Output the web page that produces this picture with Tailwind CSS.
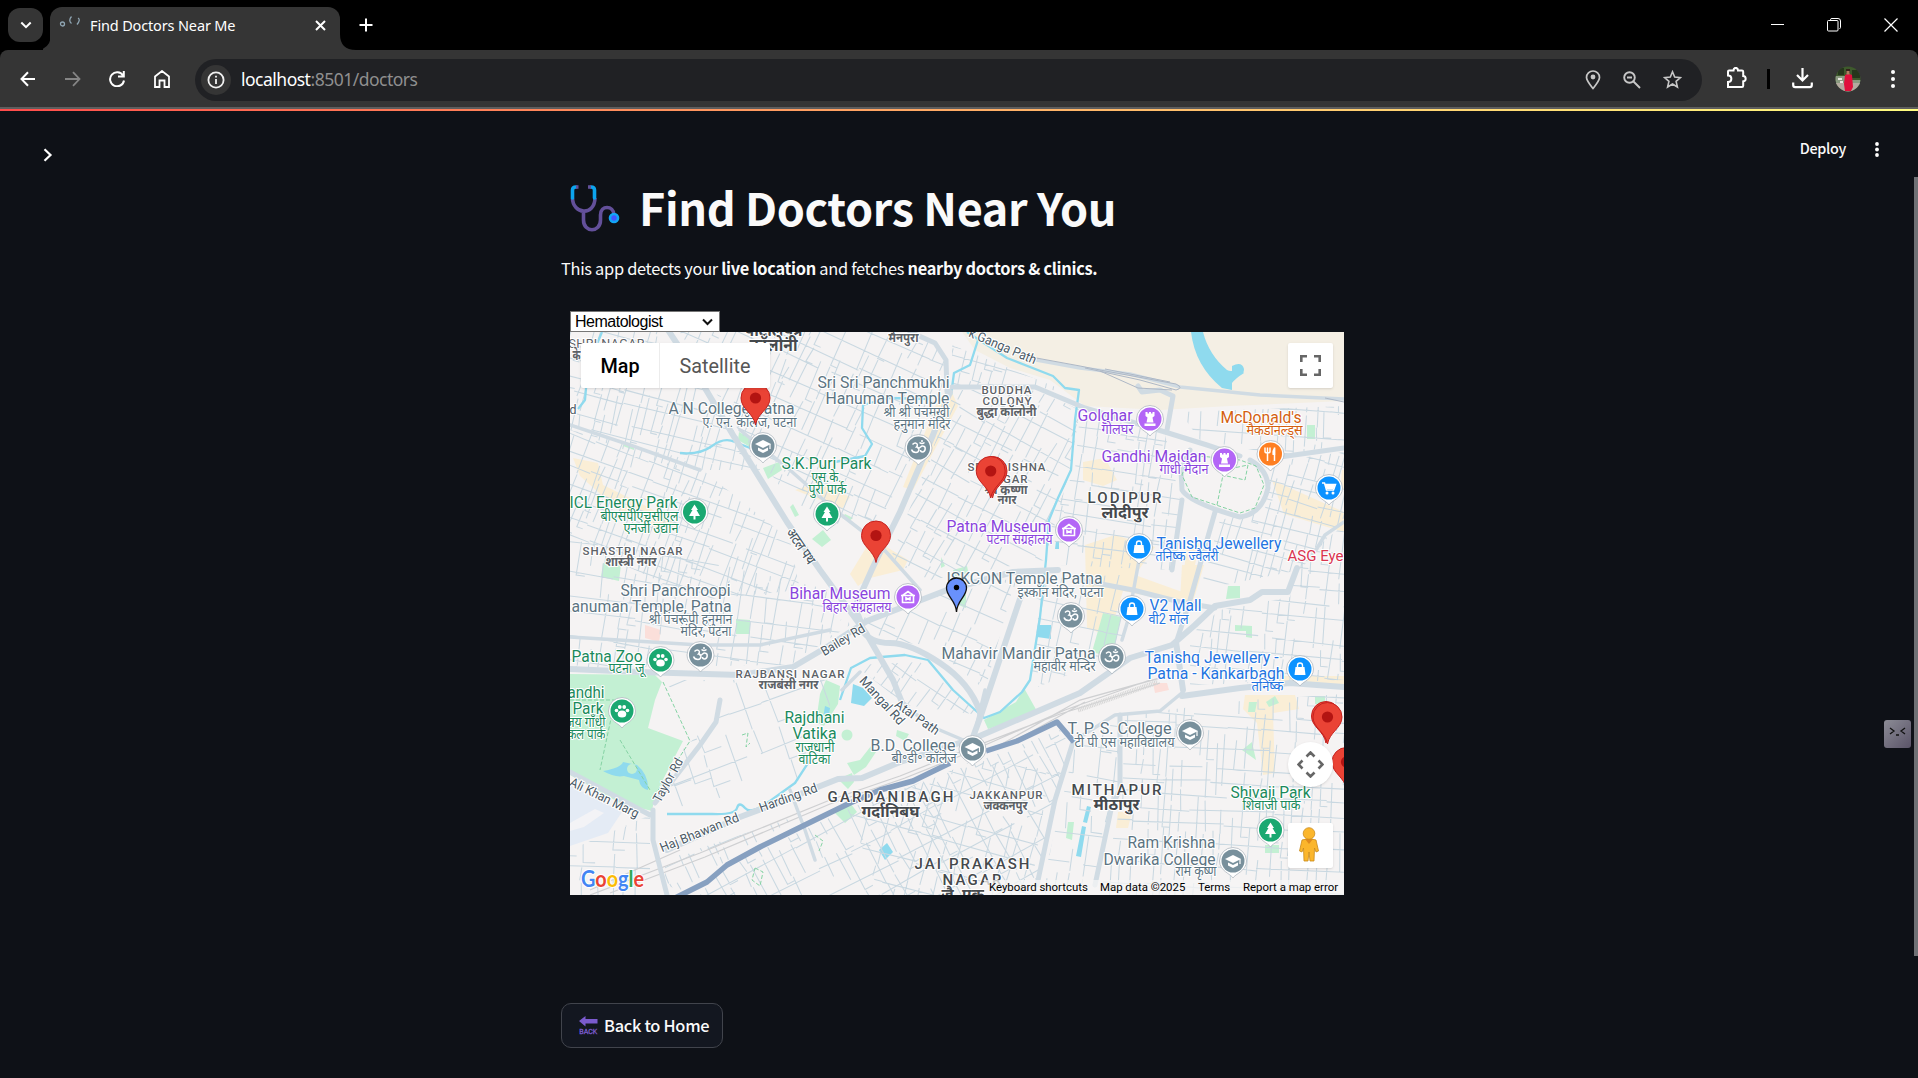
<!DOCTYPE html>
<html lang="en">
<head>
<meta charset="utf-8">
<title>Find Doctors Near Me</title>
<script src="https://cdn.jsdelivr.net/npm/@tailwindcss/browser@4"></script>
</head>
<body class="w-screen h-screen overflow-hidden bg-[#0e1117] font-['Noto_Sans_CJK_SC',sans-serif] text-[#fafafa] flex flex-col">

<!-- Tab strip -->
<div class="h-[50px] shrink-0 bg-black flex items-end">
  <div class="ml-2 mb-2 w-[35px] h-[34px] rounded-xl bg-[#353535] grid place-items-center">
    <svg width="14" height="14" viewBox="0 0 14 14" fill="none" stroke="#fff" stroke-width="2"><path d="M2.3 4.5 7 9.2 11.7 4.5"/></svg>
  </div>
  <svg class="-mr-px ml-0" width="8" height="50"><path d="M8 50H-8Q8 50 8 34Z" fill="#353535"/></svg>
  <div class="w-[290px] h-[43px] rounded-t-xl bg-[#353535] flex items-start pt-[8px] pl-[9px]">
    <svg class="mt-0" width="24" height="20" viewBox="0 0 24 20" fill="none" stroke="#8fa5b3" stroke-width="1.3"><circle cx="3.500" cy="9" r="2"/><path d="M12.500 1.500q-3.500 4 0 7M19 3q3 1.500-1 6.500"/></svg>
    <span class="ml-[7px] w-[146px] whitespace-nowrap font-['Noto_Sans',sans-serif] text-[14.5px] leading-[20px] tracking-[-0.15px] text-white">Find Doctors Near Me</span>
    <svg class="ml-[78px] mt-[4px]" width="13" height="13" viewBox="0 0 13 13" stroke="#fff" stroke-width="2"><path d="M2 2l9 9M11 2l-9 9"/></svg>
  </div>
  <svg width="16" height="16"><path d="M0 16H16Q0 16 0 0Z" fill="#353535"/></svg>
  <svg class="mb-[18px] ml-[3px]" width="14" height="14" viewBox="0 0 14 14" stroke="#fff" stroke-width="2"><path d="M7 .5v13M.5 7h13"/></svg>
  <div class="flex-1"></div>
  <div class="flex items-center gap-[43px] mb-[18px] mr-[20px]">
    <svg width="13" height="14" stroke="#fff"><path d="M0 6.500h13"/></svg>
    <svg width="14" height="14" fill="none" stroke="#fff"><path d="M3.500 3V1.500Q3.500.5 5 .5h6q2.500 0 2.500 2.500v6.500q0 1-1 1"/><rect x=".5" y="2.500" width="10.500" height="10.500" rx="1"/></svg>
    <svg width="14" height="14" stroke="#fff" stroke-width="1.2"><path d="M.5.5l13 13M13.500.5l-13 13"/></svg>
  </div>
</div>

<!-- Toolbar -->
<div class="h-[57px] shrink-0 bg-black">
 <div class="h-full rounded-t-lg bg-[#353535] flex items-center">
  <div class="flex items-center gap-[29px] ml-[20px]">
    <svg width="16" height="16" viewBox="0 0 16 16" fill="none" stroke="#fff" stroke-width="2"><path d="M15 8H2M8 1.200 1.500 8 8 14.800"/></svg>
    <svg width="16" height="16" viewBox="0 0 16 16" fill="none" stroke="#858585" stroke-width="1.800"><path d="M0 8H14M8 1.200 14.500 8 8 14.800"/></svg>
    <svg class="-ml-px" width="16" height="16" viewBox="0 0 16 16" fill="none" stroke="#fff" stroke-width="2"><path d="M14 4.500A7 7 0 1 0 15 9.500M14.800 0V5.500H9"/></svg>
    <svg width="16" height="18" viewBox="0 0 16 18" fill="none" stroke="#fff" stroke-width="1.800"><path d="M1 17V6.500L8 1l7 5.500V17h-4.500v-6.500h-5V17Z"/></svg>
  </div>
  <div class="ml-[25px] w-[1507px] h-[42px] rounded-full bg-[#202124] flex items-center pl-[6px] mt-[2px]">
    <div class="size-[30px] rounded-full bg-[#353535] grid place-items-center">
      <svg width="18" height="18" viewBox="0 0 18 18" fill="none" stroke="#f1f1f1" stroke-width="1.800"><circle cx="9" cy="9" r="7.600"/><path d="M9 8v5M9 4.800v1.800"/></svg>
    </div>
    <div class="ml-[10px] w-[190px] whitespace-nowrap font-['Noto_Sans',sans-serif] text-[17.5px] tracking-[-0.5px] text-[#8f8f8f]"><span class="text-white">localhost</span>:8501/doctors</div>
    <div class="flex-1"></div>
    <div class="flex items-center gap-[22px] mr-[20px]">
      <svg width="16" height="20" viewBox="0 0 16 20" fill="none" stroke="#c7c7c7" stroke-width="1.700"><path d="M8 18.500C4 13.500 1.500 10.500 1.500 7.500a6.500 6.500 0 0 1 13 0c0 3-2.500 6-6.500 11Z"/><circle cx="8" cy="7" r="2.400" fill="#c7c7c7" stroke="none"/></svg>
      <svg width="18" height="18" viewBox="0 0 18 18" fill="none" stroke="#c7c7c7" stroke-width="1.900"><circle cx="6.500" cy="6.500" r="5.300"/><path d="M10.500 10.500l6.500 6.500M4 6.500h5"/></svg>
      <svg width="19" height="19" viewBox="0 0 19 19" fill="none" stroke="#c7c7c7" stroke-width="1.600"><path d="M9.500 1.800l2.200 5.300 5.800.5-4.400 3.800 1.300 5.600-4.900-3-4.900 3 1.300-5.600L1.500 7.600l5.800-.5Z"/></svg>
    </div>
  </div>
  <svg class="ml-[24px] -mt-[2px]" width="21" height="22" viewBox="0 0 21 22" fill="none" stroke="#fff" stroke-width="2"><path d="M2 4.500q0-1 1-1H7.500C7.500 0 12 0 12 3.500h4q1.200 0 1.200 1.200V9c3.300.3 3.300 5 0 5.300v4.500q0 1.200-1.200 1.200H2V15c4.500 0 4.500-6.500 0-6.500Z"/></svg>
  <div class="ml-[20px] w-[3px] h-[20px] bg-black"></div>
  <svg class="ml-[22px] -mt-[2px]" width="21" height="22" viewBox="0 0 21 22" fill="none" stroke="#fff" stroke-width="2.200"><path d="M10.500 1v12M5 8l5.500 5.500L16 8M1.200 15.500V18q0 2.200 2 2.200h14.600q2 0 2-2.200v-2.500"/></svg>
  <svg class="ml-[22px]" width="26" height="26" viewBox="0 0 26 26"><defs><clipPath id="av"><circle cx="13" cy="13" r="12.500"/></clipPath></defs><g clip-path="url(#av)"><path fill="#3e5a2c" d="M0 0h26v26H0z"/><path fill="#8a9a80" d="M0 10h10v8H0zM17 14h9v5h-9z"/><path fill="#b4aaa0" d="M0 17h26v9H0z"/><path fill="#25361c" d="M3 2h6v7H3zM17 4h8v8h-8z"/><path fill="#e8e6e0" d="M3 12h4v2H3zM5 15h3v2H5z"/><path fill="#e0103c" d="M10 9q3.500-2 7 0l1 12-2 4h-6l-1-7Z"/><path fill="#35221c" d="M11 3h4v4h-4z"/><path fill="#b07c60" d="M11.500 5h3v3.500h-3z"/></g></svg>
  <svg class="ml-[30px]" width="4" height="18" fill="#fff"><circle cx="2" cy="2" r="2"/><circle cx="2" cy="9" r="2"/><circle cx="2" cy="16" r="2"/></svg>
 </div>
</div>
<div class="h-[2px] shrink-0 bg-[#5e5e5e]"></div>
<div class="h-[2px] shrink-0 bg-linear-to-r from-[#ff4b4b] to-[#fffd80]"></div>

<!-- App -->
<div class="flex-1 flex justify-between min-h-0">
  <svg class="mt-[37px] ml-[43px] mr-[510px] shrink-0" width="10" height="14" viewBox="0 0 10 14" fill="none" stroke="#fff" stroke-width="2.200"><path d="M1.500 1.300 7.500 7l-6 5.700"/></svg>

  <main class="w-[790px] ml-[-2px] flex flex-col items-start pt-[64px]">
    <h1 class="flex items-center h-[64px] whitespace-nowrap">
      <svg class="ml-[8px] mt-[3px]" width="52" height="50" viewBox="569 184 52 50" fill="none" stroke-width="3.600"><path stroke="#63509a" d="M572.500 198c0 16 22 19 22.500 0M583.500 210v10c0 13 17 13 17 0v-5c0-10 13-10 13.500 0"/><path stroke="#0ca4ee" stroke-linecap="round" d="M576 187q-3.500 0-3.500 3v8M591 187q3.500 0 3.500 3v8"/><path stroke="#63509a" d="M576 187h2.500M588 187h3"/><circle cx="614" cy="218" r="5.300" fill="#12a5f5"/><circle cx="614" cy="218" r="2.700" fill="#4355ff"/></svg>
      <span class="ml-[18px] text-[45px] font-bold leading-[64px] tracking-[-0.4px]">Find Doctors Near You</span>
    </h1>
    <p class="mt-[15px] whitespace-nowrap text-[16.4px] leading-[28px] tracking-[-0.3px]">This app detects your <b>live location</b> and fetches <b>nearby doctors &amp; clinics.</b></p>

    <div class="mt-[29px] ml-[9px]">
      <div class="w-[150px] h-[21px] bg-white border border-[#767676] flex items-center justify-between pl-[4px] pr-[6px] font-['Liberation_Sans',sans-serif] text-[16px] text-black">
        <span class="tracking-[-0.5px]">Hematologist</span>
        <svg width="11" height="8" viewBox="0 0 11 8" fill="none" stroke="#111" stroke-width="2"><path d="M1 1.500 5.500 6 10 1.500"/></svg>
      </div>
      <div class="relative w-[774px] h-[563px] bg-[#f5f3f3] overflow-hidden">
        <svg id="map" class="block" width="774" height="563" viewBox="570 332 774 563" font-family="Roboto, 'Noto Sans', sans-serif">
          <defs>
            <g id="pin"><path d="M0 27C-2 15-14.500 11-14.500 0a14.500 14.500 0 0 1 29 0C14.500 11 2 15 0 27Z" fill="#ea4335" stroke="#c5221f" stroke-width="1"/><circle r="5.600" fill="#b31412"/></g>
            <g id="poi"><path d="M0 17C-2 13-13.500 10-13.500 0a13.500 13.500 0 0 1 27 0C13.500 10 2 13 0 17Z" fill="#fff" stroke="#b0b7bf" stroke-width=".8"/></g>
            <g id="college"><path fill="#fff" d="M0-6 8-2 0 2-8-2ZM-5 1.500 0 4l5-2.500V4.500L0 7l-5-2.500Z"/><path d="M7-2v5" stroke="#fff" stroke-width="1.200"/></g>
            <g id="tree"><path fill="#fff" d="M0-7.500 3.500-2H2L5.500 4H1V7.500H-1V4H-5.500L-2-2H-3.500Z"/></g>
            <g id="rook"><path fill="#fff" d="M-4.500-7h2v1.500h1.500V-7h2v1.500h1.500V-7h2v4L2.500-1.500 3.500 3.500H-3.500L-2.500-1.500-4.500-3ZM-5.500 4.500h11V7h-11Z"/></g>
            <g id="museum"><path fill="none" stroke="#fff" stroke-width="1.600" d="M-5.500-1.500 0-5.500 5.500-1.500V5.500h-11ZM-7-1.500H7M-2 3.500V.8L0 2 2 .8v2.700"/></g>
            <g id="bag"><path fill="#fff" d="M-4.500-2h9L5.500 6h-11Z"/><path d="M-2.500-2v-1.500a2.500 2.500 0 0 1 5 0V-2" fill="none" stroke="#fff" stroke-width="1.400"/></g>
            <g id="cart"><path d="M-7-5h2.500L-2.500 2H4.500L6.500-3.500H-4" fill="none" stroke="#fff" stroke-width="1.500"/><path fill="#fff" d="M-4-3.500H6L4.500 1H-2.500Z"/><circle cx="-2" cy="5" r="1.500" fill="#fff"/><circle cx="4" cy="5" r="1.500" fill="#fff"/></g>
            <g id="food"><path d="M-3-6.500V7M-5.500-6.500v4q0 1.500 2.500 1.500T-.5-2.500v-4M4 7V-6.500" fill="none" stroke="#fff" stroke-width="1.500"/><path fill="#fff" d="M4.700-6.500V1H2Q1-5 4.700-6.500Z"/></g>
            <g id="paw" fill="#fff"><ellipse cy="3" rx="4.300" ry="3.500"/><circle cx="-5.500" cy="-.5" r="1.800"/><circle cx="5.500" cy="-.5" r="1.800"/><circle cx="-2.200" cy="-4" r="1.900"/><circle cx="2.200" cy="-4" r="1.900"/></g>
            <g id="om"><path d="M-6-3.500C-3-6.500.5-4-2-1c3.500 0 3 5.500-.5 5.500C-5 4.500-6.500 3-7 1.500M-1 0C2 1 2-2.500 4.500-2 8-1.500 7 4 4 4 2.500 4 2 3 2 2M1-5.500q2.500 2 5 0" fill="none" stroke="#fff" stroke-width="1.500"/><circle cx="3.500" cy="-7" r="1" fill="#fff"/></g>
          </defs>
          <!-- land, parks and water -->
          <path fill="#f4efe4" d="M962 332 975 350 1010 368 1050 380 1085 406 1160 410 1230 406 1344 401V332Z"/>
          <g fill="#faeed6"><path d="M573 458l25 5 5 22 45 22 30 18-12 8-50-25-36-32ZM795 490l25-8 30 15-8 12ZM938 400l12-12 8 18-45 84-10-3ZM872 538l36 22-5 10-33 8-12 8-8-12ZM1083 462l22-4 12 22-14 6-20-6ZM1085 545l30-10 40 12-20 28 50 18-2 10-60-12-14 45-22-8ZM1182 565h22l-12 40-12-4ZM1272 480l72 32v20l-60-18ZM1245 695h50l4 14-26 4 2 60-12 2-6-52-14-14ZM1280 676h64v8h-64ZM1118 812h14l-4 16h-12ZM1188 540h12l-6 30h-10ZM1342 470h2v20h-4Z"/></g>
          <g fill="#c3f0d3"><path d="M570 674 655 675 662 682 655 700 648 728 683 741 655 795 652 811 620 803 570 775ZM739 432l26 14-8 5-19-11ZM763 468l16-6 3 8-14 9ZM603 563l18 2-2 16-18-4ZM736 619l14 1v14h-14ZM823 530l8 10-9 7-10-8ZM826 680l14 6-2 18-14 22-8-4 4-28ZM984 720l32-18 8-14 14 25-50 16ZM1103 613l18 4-6 28-12 10-11-3ZM1228 586h12v12l-14 1ZM1235 625l17 1v12l-6-1v-6h-11ZM1307 425h8v14h-8ZM838 779l14-6 2 9-6 7ZM847 763l13-3 11-14 5 6-10 15-12 8ZM835 813l16-9 6 8-12 11ZM1068 822h6l-2 18-6-2ZM1265 845h14v8h-14ZM1242 750l10-8 4 18ZM1249 702h8l-2 10h-7ZM1266 702l9-6 4 7-10 4ZM953 570l14-4 2 10-12 5ZM956 594h10v14l-10-4ZM941 557l4 9-4 2ZM1315 696h10v8h-10ZM897 730l12 4-4 7-9-5ZM624 443l10 3v4l-11-4ZM793 504l6 11-4 2-5-10ZM845 514l8 4-4 3-7-3Z"/><circle cx="847" cy="735" r="5.500"/><circle cx="1000" cy="720" r="3"/></g>
          <path fill="#fbdfda" d="M645 625l16 5-2 12-14-4ZM1153 683h14l2 7-14 3Z"/>
          <path fill="#e4ebf5" d="M570 785 622 812 608 833 570 846Z"/><path fill="#f3f3f6" d="M570 823l25-14 9 4-20 14-14 4Z"/>
          <g fill="#8fdaee"><path d="M1191 332h12q6 23 24 38 6 3 10-3l7 6q-8 5-12 10v7l-10-2q-27-22-31-56ZM1232 366q10-5 12 3 0 8-12 8Z"/><path d="M603 771q18-3 20-9l14 3q12 10 11 25-8-2-9-10l-15-4q-9 2-21-5ZM1038 625h13v14l-14-2ZM853 684l10 4 9 10-8 8-13-3ZM879 850l8-7 6 9-8 8ZM1087 806l4 1-4 16-4-1ZM1082 826l4 1-5 30-5-1ZM1056 541h3v8h-4ZM825 706l5 2-2 14-6 2Z"/></g>
          <circle cx="632" cy="769" r="5" fill="#c3f0d3"/>
          <g id="streets" fill="none" stroke="#c9d8e1" stroke-width="1.050"></g>
          <!-- railway yard -->
          <path fill="none" stroke="#cfd0d2" stroke-width="1.300" d="M590 895 700 853 830 800 900 776 960 752 1060 714 1160 683M610 893 705 857 830 804 905 778 960 756 1065 710 1150 680M1000 745 1080 700 1160 678M1020 738 1085 702M590 890 680 850"/>
          <path fill="none" stroke="#d6d6d6" stroke-width="5" stroke-dasharray="1 .8" d="M1078 710 1158 682"/>
          <!-- canals -->
          <path fill="none" stroke="#8fdaee" stroke-width="2.300" stroke-linejoin="round" d="M967 332 1007 358 1053 376 1065 388 1079 390 1075 420 1071 470 1058 498 1049 520 1046 560 1040 617 1030 680 1022 692 1000 712 984 718 953 690 928 660 905 655 870 658 851 668 840 700M978 340 970 365 954 373 951 395M930 399 888 398 863 405 862 428 872 444 865 456 835 462M602 332 588 365 585 400 578 409M680 453Q700 455 712 446T735 442L755 450M667 814H712Q735 815 737 808T745 808 770 801L795 783 810 760"/>
          <!-- main roads -->
          <g fill="none" stroke="#d0dbe3" stroke-linejoin="round" stroke-linecap="round">
            <path stroke-width="6" d="M668 330 693 368 733 435 787 522 820 570 866 633 893 680 903 705M570 669 640 672 740 675 793 667 827 647 867 621 947 590 1013 572 1058 570M1023 590 980 718 970 745M862 630Q870 643 890 643T940 663 980 712M950 392 933 435 900 512 873 567 855 607 862 625M667 850 740 817 780 802 838 779 862 778 900 762 975 738 1080 693 1130 658 1172 645 1195 625 1215 606 1250 600 1262 592 1288 592 1297 568M1176 642 1183 690M1182 696 1240 688 1290 683 1344 687"/>
            <path stroke-width="5" d="M952 387H1035L1085 408 1165 432 1207 445 1240 456M1280 457 1344 448M653 810V840L667 895M720 700 716 722 700 745 655 803M570 772 650 815M1182 500 1172 570M1215 512 1190 600 1177 640M1080 580 1133 590 1180 602 1215 608M1073 742 1055 800 1037 885M1120 715V790L1112 805 1095 885M1190 450 1181 470 1182 490Q1190 503 1240 517 1262 514 1268 488 1268 470 1250 460M1167 430 1173 396 1160 390 1142 392 1138 386M910 332 935 343 946 360 947 392"/>
            <path stroke-width="3.500" d="M740 430 790 470 835 510 880 545 920 590M1140 555 1128 620 1122 640M1310 560 1325 535 1344 522M1072 742 1115 715 1160 711 1183 692M903 705 935 728 975 745M985 690 973 740M570 425 630 445 700 470M790 790 805 830 815 860M1020 357 1080 368 1130 374 1180 387 1260 395 1344 399M570 637 700 645 760 645 830 630M842 690 860 672"/>
          </g>
          <path fill="none" stroke="#aeb8c6" d="M1020 355 1080 366 1100 370 1176 384Q1184 388 1176 390L1140 380 1085 368M1100 371 1138 388 1172 390M1105 369 1170 382M1325 398 1344 402"/>
          <path fill="none" stroke="#85d3a4" stroke-dasharray="4 2" d="M1189 455 1182 475 1192 497 1240 513 1255 508 1264 485 1256 466 1240 460ZM1217 505 1224 470 1248 465 1245 480 1222 475M663 682 690 741 655 795M570 700 615 700 600 770M620 740 650 790M742 735l6-2-2 14 4-4M755 868l8 4-3 14-8-6ZM815 835l8 6-4 10"/>
          <path fill="none" stroke="#87a0c0" stroke-width="5.500" stroke-linejoin="round" d="M675 898 707 882 727 865 760 847 813 821 850 803 880 790 913 781 950 763M986 751 1017 741 1057 722 1074 742"/>
          <g id="labels"></g>
          <g id="pois"></g>
          <use href="#pin" x="755.500" y="398"/><use href="#pin" x="992.500" y="471"/><use href="#pin" x="990.700" y="471"/><use href="#pin" x="876" y="535.500"/><use href="#pin" x="1326" y="716"/><use href="#pin" x="1327.500" y="717"/><use href="#pin" x="1346.500" y="762"/>
          <path d="M956.500 612C956 600 946.500 597 946.500 588a10 10 0 0 1 20 0C966.500 597 957 600 956.500 612Z" fill="#6991fd" stroke="#111" stroke-width="1.300"/><circle cx="956.500" cy="587.500" r="2.700"/>
          <g font-family="Lato, Roboto, sans-serif" font-weight="700" stroke="#fff" stroke-width="2" paint-order="stroke"><text x="581" y="887" font-size="23" textLength="63" lengthAdjust="spacingAndGlyphs"><tspan fill="#4285f4">G</tspan><tspan fill="#ea4335">o</tspan><tspan fill="#fbbc04">o</tspan><tspan fill="#4285f4">g</tspan><tspan fill="#34a853">l</tspan><tspan fill="#ea4335">e</tspan></text></g>
        </svg>
        <!-- controls over the map -->
        <div class="absolute left-[11px] top-[11px] flex h-[45px] bg-white rounded-xs shadow font-['Roboto',sans-serif] text-[19.800px] leading-[47px]">
          <div class="w-[78px] text-center font-medium text-black">Map</div>
          <div class="w-[111px] text-center text-[#565656] border-l border-[#ececec]">Satellite</div>
        </div>
        <div class="absolute left-[718px] top-[11px] size-[45px] bg-white rounded-xs shadow grid place-items-center">
          <svg width="21" height="21" fill="none" stroke="#666" stroke-width="2.600"><path d="M1.300 7V1.300H7M14 1.300h5.700V7M19.700 14v5.700H14M7 19.700H1.300V14"/></svg>
        </div>
        <div class="absolute left-[718px] top-[410px] size-[45px] bg-white rounded-full shadow grid place-items-center">
          <svg width="27" height="27" viewBox="-13.500 -13.500 27 27" fill="none" stroke="#666" stroke-width="2.600"><path d="M-4-8 0-12 4-8M-4 8 0 12 4 8M-8-4-12 0-8 4M8-4 12 0 8 4"/></svg>
        </div>
        <div class="absolute left-[718px] top-[491px] size-[45px] bg-white rounded-xs shadow grid place-items-center">
          <svg class="-ml-[3px] -mt-[2px]" width="20" height="35" viewBox="0 0 20 35"><path fill="#fbb62c" stroke="#c98a1b" stroke-width=".8" d="M3 13q7-3 14 0l2.500 11-2.500 1-1.500-4L15 34h-4l-1-9-1 9H5l-.5-13L3 25 .5 24Z"/><path fill="#e08a1e" d="M6 12h8l-4 5Z"/><circle cx="10" cy="6.500" r="5.800" fill="#fbb62c" stroke="#c98a1b" stroke-width=".8"/></svg>
        </div>
        <div class="absolute right-0 bottom-0 h-[15px] pl-[5px] pr-[7px] flex items-center bg-[#f5f5f5]/75 font-['Roboto',sans-serif] text-[11.400px] text-black whitespace-nowrap">
          <span class="w-[111px]">Keyboard shortcuts</span><span class="w-[98px]">Map data ©2025</span><span class="w-[45px]">Terms</span><span class="w-[94px]">Report a map error</span>
        </div>
      </div>
    </div>

    <div class="mt-[108px] w-[162px] h-[45px] rounded-[10px] border border-[#41444c] bg-[#131720] flex items-center pl-[17px]">
      <svg width="19" height="19" viewBox="0 0 19 19"><path fill="#7b5bce" d="M0 5 6.500 0v3H18.500v4.500H6.500v3Z"/><text x=".3" y="18" font-family="Roboto" font-size="7.400" fill="#7b5bce" stroke="#7b5bce" stroke-width=".3" textLength="18" lengthAdjust="spacingAndGlyphs">BACK</text></svg>
      <span class="ml-[6px] -mt-[2px] text-[16.4px] leading-[28px] tracking-[-0.3px] font-medium whitespace-nowrap">Back to Home</span>
    </div>
  </main>

  <div class="flex-1"></div>
  <div class="flex items-start">
    <div class="mt-[25px] text-[14.4px] leading-[24px] tracking-[-0.3px] font-medium whitespace-nowrap">Deploy</div>
    <svg class="mt-[31px] ml-[29px]" width="4" height="15" fill="#fff"><circle cx="2" cy="2" r="1.900"/><circle cx="2" cy="7.500" r="1.900"/><circle cx="2" cy="13" r="1.900"/></svg>
    <div class="mt-[609px] ml-[5px] w-[27px] h-[28px] rounded-[3px] bg-linear-to-br from-[#8c8c96] to-[#5a5468] grid place-items-center">
      <svg class="-mt-[4px]" width="17" height="10" fill="none" stroke="#111" stroke-width="1.300"><path d="M1 1l4 3-4 3M16 1l-4 3 4 3M7 8h3"/></svg>
    </div>
    <div class="mt-[66px] ml-[3px] w-[4px] h-[779px] bg-[#6f7175]"></div>
  </div>
</div>

<script>
const NS = 'http://www.w3.org/2000/svg';
const el = (name, attrs, parent) => {
  const n = document.createElementNS(NS, name);
  for (const k in attrs) n.setAttribute(k, attrs[k]);
  parent.appendChild(n);
  return n;
};
const C = { s: '#5c7482', g: '#1a8a5c', p: '#8a44dd', b: '#2374e1', o: '#d4600f', r: '#d93550', k: '#45494d', n: '#4b5a66', l: '#5d6267' };

// text, left, baseline, width, colour, size, weight, rotation
const labels = [
['SHRI NAGAR',569,347.5,76,'l',12.5,400],['के',573,360,8,'l',13,700],['पाटलिपुत्र',745,336,58,'k',17,700],['कॉलोनी',750,351,48,'k',17,700],['d',570,414,7,'n',13,400],
['A N College Patna',669,414,126,'s',16,400],['ए. एन. कॉलेज, पटना',703,427,94,'s',13,400],
['S.K.Puri Park',782,469,90,'g',16,400],['एस.के.',812,482,30,'g',13,400],['पुरी पार्क',809,494,38,'g',13,400],
['ICL Energy Park',570,507.5,108,'g',16,400],['बीएसपीएचसीएल',601,521,78,'g',13,400],['एनर्जी उद्यान',624,533,55,'g',13,400],
['मैनपुरा',889,342,30,'l',12,700],['k Ganga Path',968,336,72,'n',13,400,23],
['Sri Sri Panchmukhi',818,388,132,'s',16,400],['Hanuman Temple',826,404,124,'s',16,400],['श्री श्री पंचमुखी',884,417,66,'s',13,400],['हनुमान मंदिर',894,429,57,'s',13,400],
['BUDDHA',982,394,50,'l',11.5,500],['COLONY',983,405,49,'l',11.5,500],['बुद्धा कॉलोनी',977,416,60,'l',12,700],
['SRI KRISHNA',968,471,78,'l',11.5,500],['NAGAR',986,482.5,42,'l',11.5,500],['श्री कृष्णा',985,493.5,43,'l',12,700],['नगर',998,504,19,'l',12,700],
['Golghar',1078,421,55,'p',16,400],['गोलघर',1102,434,32,'p',13,400],['Gandhi Maidan',1102,461.5,105,'p',16,400],['गांधी मैदान',1160,474,49,'p',13,400],
["McDonald's",1221,423,81,'o',16,400],['मैकडॉनल्ड्स',1247,435,56,'o',13,400],
['LODIPUR',1088,503,74,'k',15,500],['लोदीपुर',1102,518,47,'k',16,700],
['Tanishq Jewellery',1157,549,125,'b',16,400],['तनिष्क ज्वैलरी',1156,561,63,'b',13,400],['ASG Eye',1288,561,56,'r',15.5,400],
['SHASTRI NAGAR',583,555,100,'l',11.5,500],['शास्त्री नगर',606,566,51,'l',12,700],
['Shri Panchroopi',621,596,110,'s',16,400],['anuman Temple, Patna',572,612,160,'s',16,400],['श्री पंचरूपी हनुमान',649,624,84,'s',13,400],['मंदिर, पटना',681,636,51,'s',13,400],
['अटल पथ',786,532,40,'n',13,500,56],
['Bihar Museum',790,599,101,'p',16,400],['बिहार संग्रहालय',823,612,69,'p',13,400],
['Patna Museum',947,531.5,105,'p',16,400],['पटना संग्रहालय',987,544,66,'p',13,400],
['ISKCON Temple Patna',947,584,156,'s',16,400],['इस्कॉन मंदिर, पटना',1018,597,86,'s',13,400],
['Patna Zoo',572,661.5,71,'g',16,400],['पटना जू',609,673,36,'g',13,400],
['RAJBANSI NAGAR',736,678,109,'l',11.5,500],['राजबंसी नगर',759,689,60,'l',12,700],
['andhi',568,698,37,'g',16,400],['Park',573,714,31,'g',16,400],['जय गाँधी',566,727,40,'g',13,400],['कल पार्क',568,739,38,'g',13,400],
['Mahavir Mandir Patna',942,659,154,'s',16,400],['महावीर मन्दिर',1034,671,62,'s',13,400],
['Bailey Rd',824,656,49,'n',13,400,-31],['Mangal Rd',859,681,60,'n',13,400,48],['Atal Path',894,706,51,'n',13,400,35],
['V2 Mall',1150,611,52,'b',16,400],['वी2 मॉल',1149,623.5,40,'b',13,400],
['Tanishq Jewellery -',1145,663,134,'b',16,400],['Patna - Kankarbagh',1148,679,137,'b',16,400],['तनिष्क',1252,691,32,'b',13,400],
['Rajdhani',785,723,60,'g',16,400],['Vatika',793,739,44,'g',16,400],['राजधानी',796,752,39,'g',13,400],['वाटिका',799,764,32,'g',13,400],
['B.D. College',871,751,85,'s',16,400],['बी॰डी॰ कॉलेज',892,763,65,'s',13,400],
['Ali Khan Marg',569,785,75,'n',13,400,26],['Taylor Rd',660,803,48,'n',13,400,-61],['Haj Bhawan Rd',662,852,84,'n',13,400,-22],['Harding Rd',761,812,61,'n',13,400,-20],
['GARDANIBAGH',828,802,126,'k',15,500],['गर्दानिबघ',862,817,58,'k',16,700],
['JAI PRAKASH',915,869,115,'k',15,500],['NAGAR',943,885,59,'k',15,500],['जै. एक',942,900,43,'k',16,700],
['T. P. S. College',1068,734,104,'s',16,400],['टी पी एस महाविद्यालय',1075,747,100,'s',13,400],
['JAKKANPUR',970,799,73,'l',11.5,500],['जक्कनपुर',984,810,44,'l',12,700],
['MITHAPUR',1072,795,90,'k',15,500],['मीठापुर',1094,810,46,'k',16,700],
['Shivaji Park',1231,798,80,'g',16,400],['शिवाजी पार्क',1243,810,58,'g',13,400],
['Ram Krishna',1128,848,88,'s',16,400],['Dwarika College',1104,864.5,112,'s',16,400],['राम कृष्ण',1176,876,41,'s',13,400]
];
const lg = document.getElementById('labels');
for (const [t, x, y, w, c, s, wt, r] of labels) {
  const deva = /[\u0900-\u097f]/.test(t);
  const a = { x: r ? x : x - .5, y: y + .3, textLength: w, fill: C[c], 'font-size': deva && s === 13 ? 14.2 : s, 'font-weight': wt, stroke: '#fff', 'stroke-width': 2.2, 'stroke-linejoin': 'round', 'paint-order': 'stroke', lengthAdjust: deva || !/^[A-Z ]+$/.test(t) ? 'spacingAndGlyphs' : 'spacing' };
  if (r) a.transform = `rotate(${r} ${x} ${y})`;
  el('text', a, lg).textContent = t;
}

// glyph, x, y, colour
const S = '#78909c', G = '#1aa871', P = '#b366f6', B = '#0c92ff';
const pois = [['college',763,446,S],['tree',694.5,512,G],['tree',827,514,G],['om',918.5,448,S],['rook',1150,419,P],['rook',1224.5,460,P],['food',1270.5,454,'#fe7f22'],['cart',1329,488,B],['bag',1139,547,B],['museum',1069,530,P],['museum',908,597,P],['om',1071,616,S],['om',1112,657,S],['om',700.5,655,S],['paw',660.5,660,G],['paw',622,711,G],['bag',1132,609,B],['bag',1300,669,B],['college',972.5,749,S],['college',1190,733,S],['tree',1270.5,830,G],['college',1233,861,S]];
const pg = document.getElementById('pois');
for (const [g, x, y, c] of pois) {
  const n = el('g', { transform: `translate(${x} ${y})` }, pg);
  el('use', { href: '#poi' }, n);
  el('circle', { r: 11.5, fill: c }, n);
  el('use', { href: '#' + g }, n);
}

// Side streets: blocks of short lanes, each block with its own bearing
let seed = 7;
const rnd = () => (seed = (seed * 16807) % 2147483647) / 2147483647;
const blocks = [
  ['570,332 668,332 760,470 680,470 570,430', 14, 8], ['570,430 690,460 790,540 800,590 700,600 570,540', 20, 8],
  ['570,540 700,560 830,590 850,625 790,665 570,668', 8, 11], ['680,332 905,332 945,350 945,395 870,540 790,500 735,425', 24, 9],
  ['955,390 1035,390 1080,410 1070,470 1045,560 930,580 890,560', 28, 10], ['952,345 1075,395 1035,386 952,386', 15, 11],
  ['1080,412 1165,434 1180,500 1170,570 1060,565 1050,520 1075,470', 8, 10], ['1180,412 1344,406 1344,445 1280,455 1200,440', 4, 10],
  ['1270,462 1344,452 1344,520 1300,570 1200,590 1220,520 1265,510', 15, 8], ['1300,560 1344,525 1344,680 1190,685 1190,635 1220,610 1290,597', 6, 9],
  ['1000,580 1120,575 1125,640 1080,670 1030,690 1040,600', 12, 11], ['840,620 940,595 1015,580 985,690 930,645 870,640', 25, 15],
  ['660,680 840,680 800,780 665,810 670,760 715,720', -20, 22], ['855,665 920,662 980,715 905,705', 35, 10],
  ['720,870 850,808 950,772 1060,730 1070,745 1035,895 700,895', -28, 11], ['850,815 975,760 1050,770 1030,895 880,895', 15, 13],
  ['1075,745 1118,720 1118,790 1095,880 1040,895', 8, 14], ['1125,715 1250,700 1344,694 1344,895 1100,895 1122,800', 3, 9],
  ['570,850 650,815 650,895 570,895', 2, 15], ['665,860 800,815 680,890 665,885', -24, 11]
];
const sg = document.getElementById('streets');
blocks.forEach(([pts, ang, gap], i) => {
  const cp = el('clipPath', { id: 'c' + i }, sg);
  el('polygon', { points: pts }, cp);
  const xy = pts.split(' ').map(p => p.split(',').map(Number));
  const xs = xy.map(p => p[0]), ys = xy.map(p => p[1]);
  const cx = (Math.min(...xs) + Math.max(...xs)) / 2, cy = (Math.min(...ys) + Math.max(...ys)) / 2;
  const R = Math.hypot(Math.max(...xs) - cx, Math.max(...ys) - cy) + 10;
  let d = '';
  for (let v = -R; v < R; v += gap * (1.3 + rnd() * 1.4)) {
    for (let u = -R; u < R;) {
      const len = 30 + rnd() * 90, k = (rnd() - .5) * 5;
      d += `M${u.toFixed(1)} ${v.toFixed(1)}l${len.toFixed(1)} ${k.toFixed(1)}`;
      u += len + (rnd() < .3 ? 14 : 0);
    }
  }
  for (let u = -R; u < R; u += gap * (.65 + rnd() * .7)) {
    for (let v = -R; v < R;) {
      const len = 12 + rnd() * 40, k = (rnd() - .5) * 4;
      if (rnd() < .74) d += `M${u.toFixed(1)} ${v.toFixed(1)}l${k.toFixed(1)} ${len.toFixed(1)}${rnd() < .3 ? 'h' + (gap * .8).toFixed(1) : ''}`;
      v += len + rnd() * 5;
    }
  }
  const g = el('g', { 'clip-path': `url(#c${i})` }, sg);
  el('path', { d, transform: `translate(${cx} ${cy}) rotate(${ang})` }, g);
});
</script>
</body>
</html>
